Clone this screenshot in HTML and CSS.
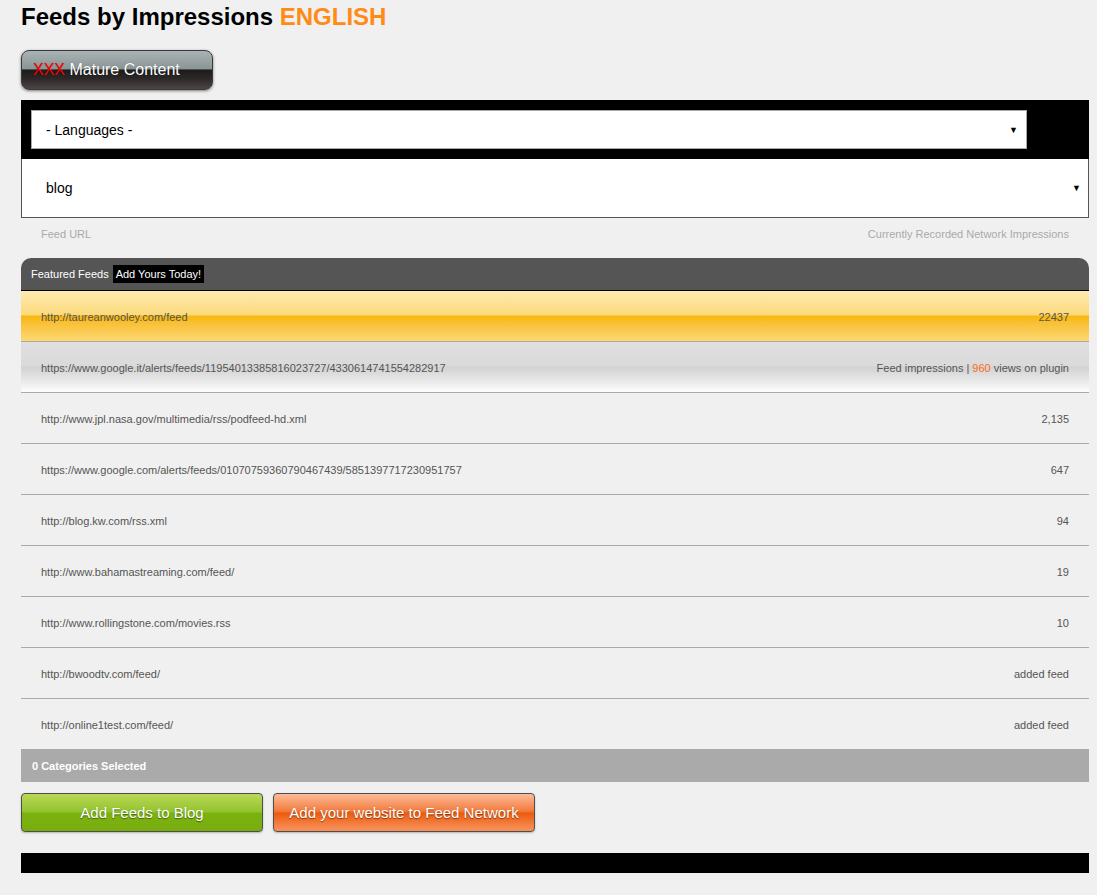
FILE: index.html
```html
<!DOCTYPE html>
<html>
<head>
<meta charset="utf-8">
<title>Feeds by Impressions</title>
<link rel="stylesheet" href="styles.css">
</head>
<body>
<div class="page">
  <h1 class="title">Feeds by Impressions <span class="lang">ENGLISH</span></h1>
  <div class="mature-wrap">
    <button class="mature"><span class="xxx">XXX</span> Mature Content</button>
  </div>
  <div class="filters">
    <div class="select select-lang"><span>- Languages -</span><span class="arrow">&#9660;</span></div>
  </div>
  <div class="select select-cat"><span>blog</span><span class="arrow">&#9660;</span></div>
  <div class="labels"><span>Feed URL</span><span>Currently Recorded Network Impressions</span></div>
  <div class="feeds">
    <div class="feeds-head">Featured Feeds <span class="add-yours">Add Yours Today!</span></div>
    <div class="row row-gold"><span>http://taureanwooley.com/feed</span><span>22437</span></div>
    <div class="row row-silver"><span>https://www.google.it/alerts/feeds/11954013385816023727/4330614741554282917</span><span>Feed impressions | <span class="hl">960</span> views on plugin</span></div>
    <div class="row"><span>http://www.jpl.nasa.gov/multimedia/rss/podfeed-hd.xml</span><span>2,135</span></div>
    <div class="row"><span>https://www.google.com/alerts/feeds/01070759360790467439/5851397717230951757</span><span>647</span></div>
    <div class="row"><span>http://blog.kw.com/rss.xml</span><span>94</span></div>
    <div class="row"><span>http://www.bahamastreaming.com/feed/</span><span>19</span></div>
    <div class="row"><span>http://www.rollingstone.com/movies.rss</span><span>10</span></div>
    <div class="row"><span>http://bwoodtv.com/feed/</span><span>added feed</span></div>
    <div class="row row-last"><span>http://online1test.com/feed/</span><span>added feed</span></div>
    <div class="cats">0 Categories Selected</div>
  </div>
  <div class="actions">
    <button class="btn btn-green">Add Feeds to Blog</button>
    <button class="btn btn-orange">Add your website to Feed Network</button>
  </div>
  <div class="footer-bar"></div>
</div>
</body>
</html>
```

FILE: styles.css
```css
html, body {
  margin: 0;
  padding: 0;
  background: #f0f0f0;
  font-family: "Liberation Sans", Arial, sans-serif;
}
.page {
  width: 1068px;
  padding: 3px 0 0 21px;
}
.title {
  margin: 0;
  font-size: 24px;
  line-height: 28px;
  font-weight: bold;
  color: #000;
}
.lang { color: #ff8a14; }
.mature-wrap {
  margin-top: 19px;
  height: 40px;
}
.mature {
  width: 192px;
  height: 40px;
  border: 1px solid #3a3a3a;
  border-radius: 8px;
  padding: 0 0 0 11px;
  text-align: left;
  font-family: "Liberation Sans", Arial, sans-serif;
  font-size: 16px;
  color: #fff;
  background: linear-gradient(to bottom, #aab4b4 0%, #8a9595 47%, #1c1b1b 50%, #2a2626 70%, #4d4545 100%);
  box-shadow: 0 1px 3px rgba(0,0,0,0.5);
  text-shadow: 0 0 1px rgba(0,0,0,0.4);
}
.xxx { color: #ff0000; }
.filters {
  margin-top: 10px;
  background: #000;
  padding: 10px 0 10px 10px;
}
.select {
  display: flex;
  justify-content: space-between;
  align-items: center;
  background: #fff;
  font-size: 14px;
  color: #000;
  box-sizing: border-box;
}
.select-lang {
  width: 996px;
  height: 39px;
  border: 1px solid #a9a9a9;
  padding: 0 8px 0 14px;
}
.select-cat {
  width: 1068px;
  height: 59px;
  border: 1px solid #555;
  border-top: 0;
  padding: 0 7px 0 24px;
}
.arrow {
  font-size: 9px;
  color: #000;
}
.labels {
  display: flex;
  justify-content: space-between;
  padding: 9px 20px 0 20px;
  height: 14px;
  line-height: 14px;
  font-size: 11px;
  color: #aaa;
  margin-bottom: 17px;
}
.feeds-head {
  height: 32px;
  border-bottom: 1px solid #000;
  background: #555;
  border-radius: 10px 10px 0 0;
  color: #fff;
  font-size: 11px;
  padding-left: 10px;
  display: flex;
  align-items: center;
  gap: 4px;
}
.add-yours {
  background: #000;
  color: #fff;
  padding: 0 3px;
  line-height: 18px;
}
.row {
  display: flex;
  justify-content: space-between;
  align-items: center;
  height: 50px;
  box-sizing: border-box;
  height: 51px;
  padding: 2px 20px 0 20px;
  border-bottom: 1px solid #aaa;
  font-size: 11px;
  color: #555;
}
.row-last { border-bottom: 0; height: 50px; }
.row-gold {
  background: linear-gradient(to bottom, #feebb2 0%, #fcd97a 48%, #f8b80e 50%, #f9c440 70%, #fcd873 100%);
}
.row-silver {
  background: linear-gradient(to bottom, #dfdfdf 0%, #dadada 48%, #d2d2d2 50%, #e6e6e6 75%, #fdfdfd 100%);
}
.hl { color: #ff6a1a; }
.cats {
  height: 33px;
  background: #aaa;
  color: #fff;
  font-size: 11px;
  font-weight: bold;
  padding-left: 11px;
  display: flex;
  align-items: center;
}
.actions {
  display: flex;
  gap: 10px;
  margin-top: 11px;
}
.btn {
  height: 39px;
  border: 1px solid #4d4d4d;
  border-radius: 4px;
  font-family: "Liberation Sans", Arial, sans-serif;
  font-size: 15px;
  color: #fff;
  text-shadow: 0 1px 1px rgba(0,0,0,0.45);
  box-shadow: 0 1px 2px rgba(0,0,0,0.25);
  padding: 0;
}
.btn-green {
  width: 242px;
  background: linear-gradient(to bottom, #bcd857 0%, #92c32f 48%, #7ab20f 52%, #79ad0f 100%);
}
.btn-orange {
  width: 262px;
  background: linear-gradient(to bottom, #fdbc98 0%, #f27b3e 46%, #ec5a0c 52%, #f58448 85%, #f8925a 100%);
}
.footer-bar {
  margin-top: 21px;
  height: 20px;
  background: #000;
}
```
